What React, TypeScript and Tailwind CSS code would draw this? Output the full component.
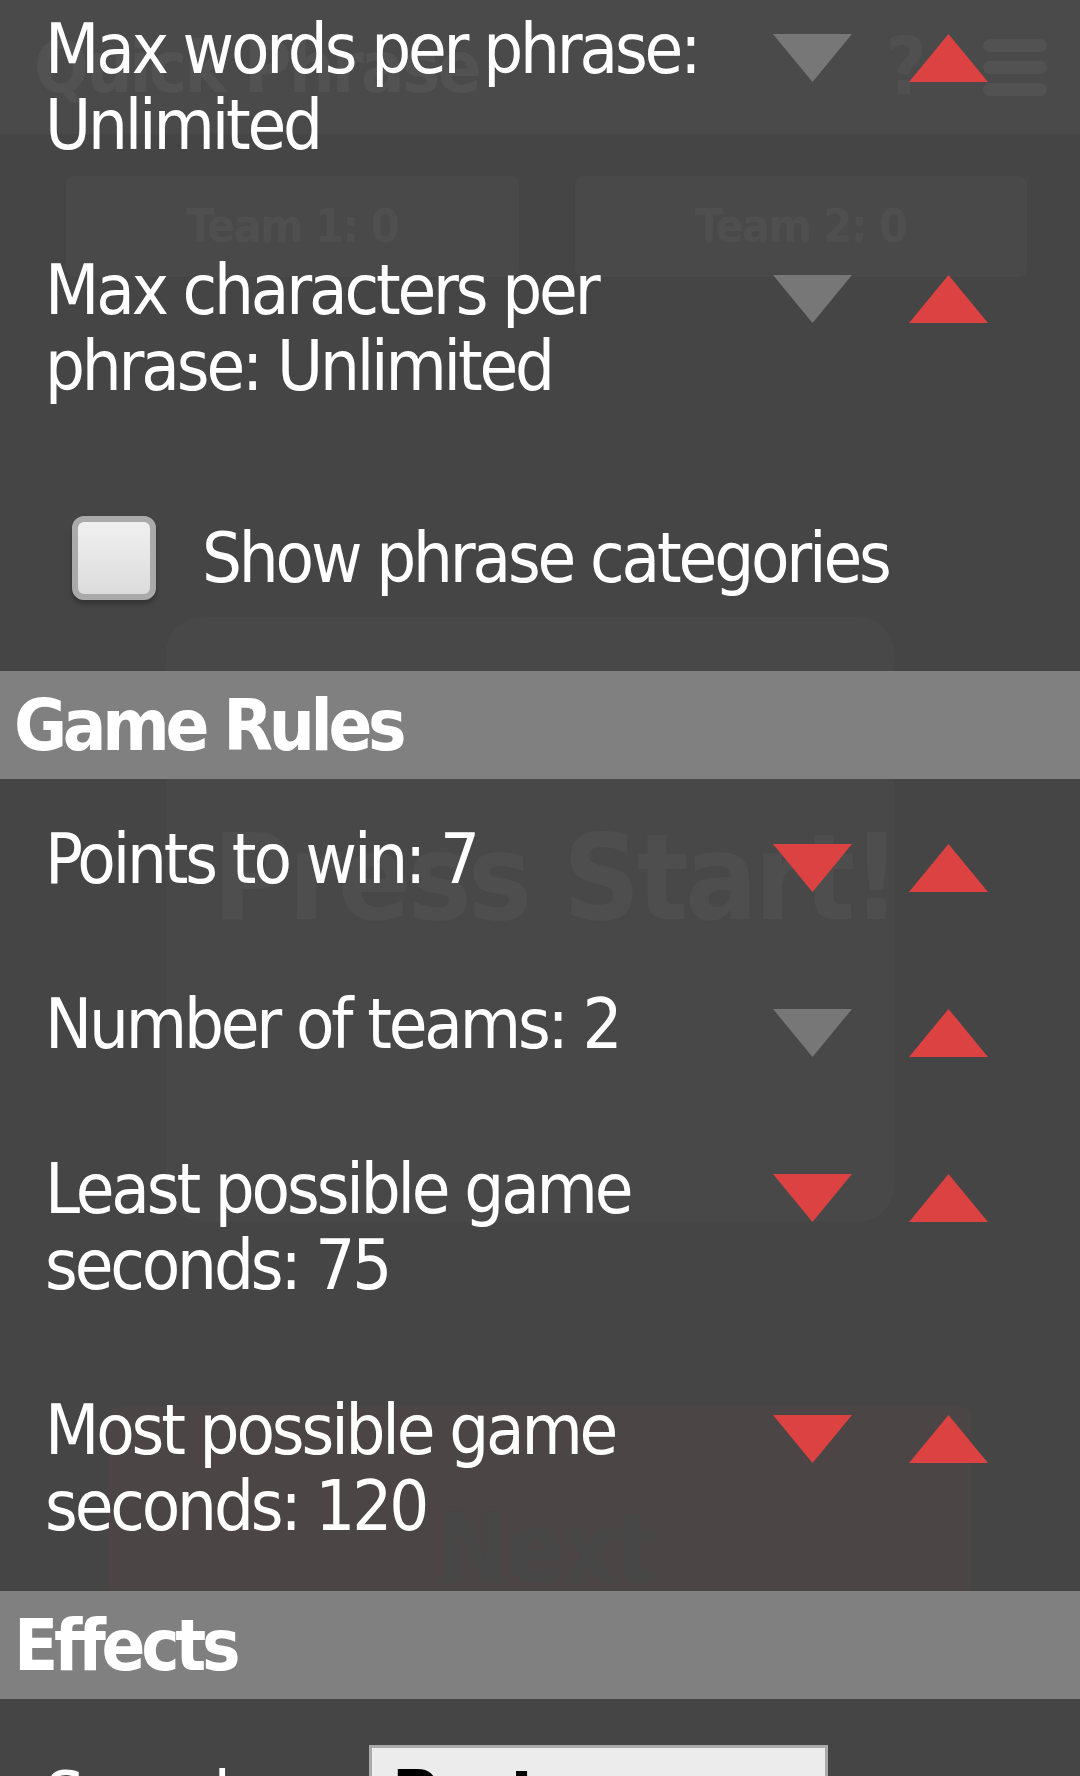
import React from 'react';

const RED = '#dc4242';
const GRAY = '#777777';

const Arrow = ({ dir, on }: { dir: 'up' | 'down'; on: boolean }) => (
  <svg width="79" height="48" viewBox="0 0 79 48" className="shrink-0">
    <polygon
      points={dir === 'down' ? '0,0 79,0 39.5,48' : '39.5,0 79,48 0,48'}
      fill={on ? RED : GRAY}
    />
  </svg>
);

type Setting = { label: string; down: boolean; up: boolean };

const filterRows: Setting[] = [
  { label: 'Max words per phrase: Unlimited', down: false, up: true },
  { label: 'Max characters per phrase: Unlimited', down: false, up: true },
];

const ruleRows: Setting[] = [
  { label: 'Points to win: 7', down: true, up: true },
  { label: 'Number of teams: 2', down: false, up: true },
  { label: 'Least possible game seconds: 75', down: true, up: true },
  { label: 'Most possible game seconds: 120', down: true, up: true },
];

const SettingRow = ({ s }: { s: Setting }) => (
  <div className="flex items-start pt-[42px] pb-[47px] pl-[45px] pr-[92px]">
    <div className="min-w-0 flex-1 pr-[20px] text-[70px] leading-[76px] tracking-[-0.045em] text-white">
      {s.label}
    </div>
    <div className="mt-[23px] flex gap-[57px]">
      <Arrow dir="down" on={s.down} />
      <Arrow dir="up" on={s.up} />
    </div>
  </div>
);

const SectionBar = ({ title }: { title: string }) => (
  <div className="flex h-[108px] items-center bg-[#808080] px-[14px]">
    <h2 className="text-[72px] leading-[108px] font-bold tracking-[-0.06em] text-white">{title}</h2>
  </div>
);

// the game screen that sits dimmed under the settings panel
const GameScreen = () => (
  <div className="flex flex-col">
    <div className="flex h-[134px] items-center justify-between bg-[#4a4a4a] pr-[33px] pl-[34px]">
      <span className="text-[72px] leading-none font-bold tracking-[-0.04em] text-[#525252]">Quick Phrase</span>
      <div className="flex items-center gap-[56px]">
        <span className="text-[80px] leading-none font-bold text-[#505050]">?</span>
        <div className="flex w-[64px] flex-col gap-[9px]">
          <div className="h-[13px] rounded-full bg-[#525252]" />
          <div className="h-[13px] rounded-full bg-[#525252]" />
          <div className="h-[13px] rounded-full bg-[#525252]" />
        </div>
      </div>
    </div>

    <div className="mt-[42px] grid grid-cols-2 gap-[56px] pr-[53px] pl-[66px]">
      <div className="flex h-[101px] items-center justify-center rounded-lg bg-[#494949] text-[46px] font-bold tracking-[-0.03em] text-[#4f4f4f]">
        Team 1: 0
      </div>
      <div className="flex h-[101px] items-center justify-center rounded-lg bg-[#494949] text-[46px] font-bold tracking-[-0.03em] text-[#4f4f4f]">
        Team 2: 0
      </div>
    </div>

    <div className="mt-[340px] mr-[186px] ml-[166px] flex h-[605px] flex-col items-center rounded-[36px] bg-[#484848] pt-[196px] pl-[50px]">
      <span className="text-[120px] leading-[130px] font-bold tracking-[-0.03em] whitespace-nowrap text-[#4e4e4e]">
        Press Start!
      </span>
    </div>

    <div className="mt-[185px] mr-[109px] ml-[109px] flex h-[200px] items-start justify-center rounded-lg bg-[#4b4545] pt-[92px] pl-[10px]">
      <span className="text-[96px] leading-[100px] font-bold tracking-[-0.03em] text-[#474747]">Next</span>
    </div>
  </div>
);

export default function App() {
  return (
    <div className="relative h-[1776px] w-[1080px] overflow-hidden bg-[#454545] font-['DejaVu_Sans_Condensed','DejaVu_Sans',sans-serif]">
      <GameScreen />

      <div className="absolute inset-0">
        <div className="-mt-[31px]">
          {filterRows.map((s) => (
            <SettingRow key={s.label} s={s} />
          ))}

          <div className="flex h-[220px] items-center pb-[6px] pl-[72px]">
            <div className="h-[84px] w-[84px] shrink-0 rounded-[12px] border-[6px] border-[#aaaaaa] bg-gradient-to-b from-[#f0f0f0] to-[#dcdcdc] shadow-[0_4px_4px_rgba(0,0,0,0.25)]" />
            <span className="ml-[46px] text-[70px] leading-[76px] tracking-[-0.045em] text-white">
              Show phrase categories
            </span>
          </div>

          <SectionBar title="Game Rules" />
          {ruleRows.map((s) => (
            <SettingRow key={s.label} s={s} />
          ))}

          <SectionBar title="Effects" />
          <div className="flex items-start pt-[46px] pl-[45px]">
            <span className="w-[324px] pt-[14px] text-[70px] leading-[76px] tracking-[-0.045em] text-white">
              Sound pack:
            </span>
            <div className="h-[96px] w-[459px] border-[3px] border-[#aaaaaa] bg-[#ececec] px-[20px] pt-[10px] text-[70px] leading-[76px] font-bold text-black">
              Party
            </div>
          </div>
        </div>
      </div>
    </div>
  );
}
